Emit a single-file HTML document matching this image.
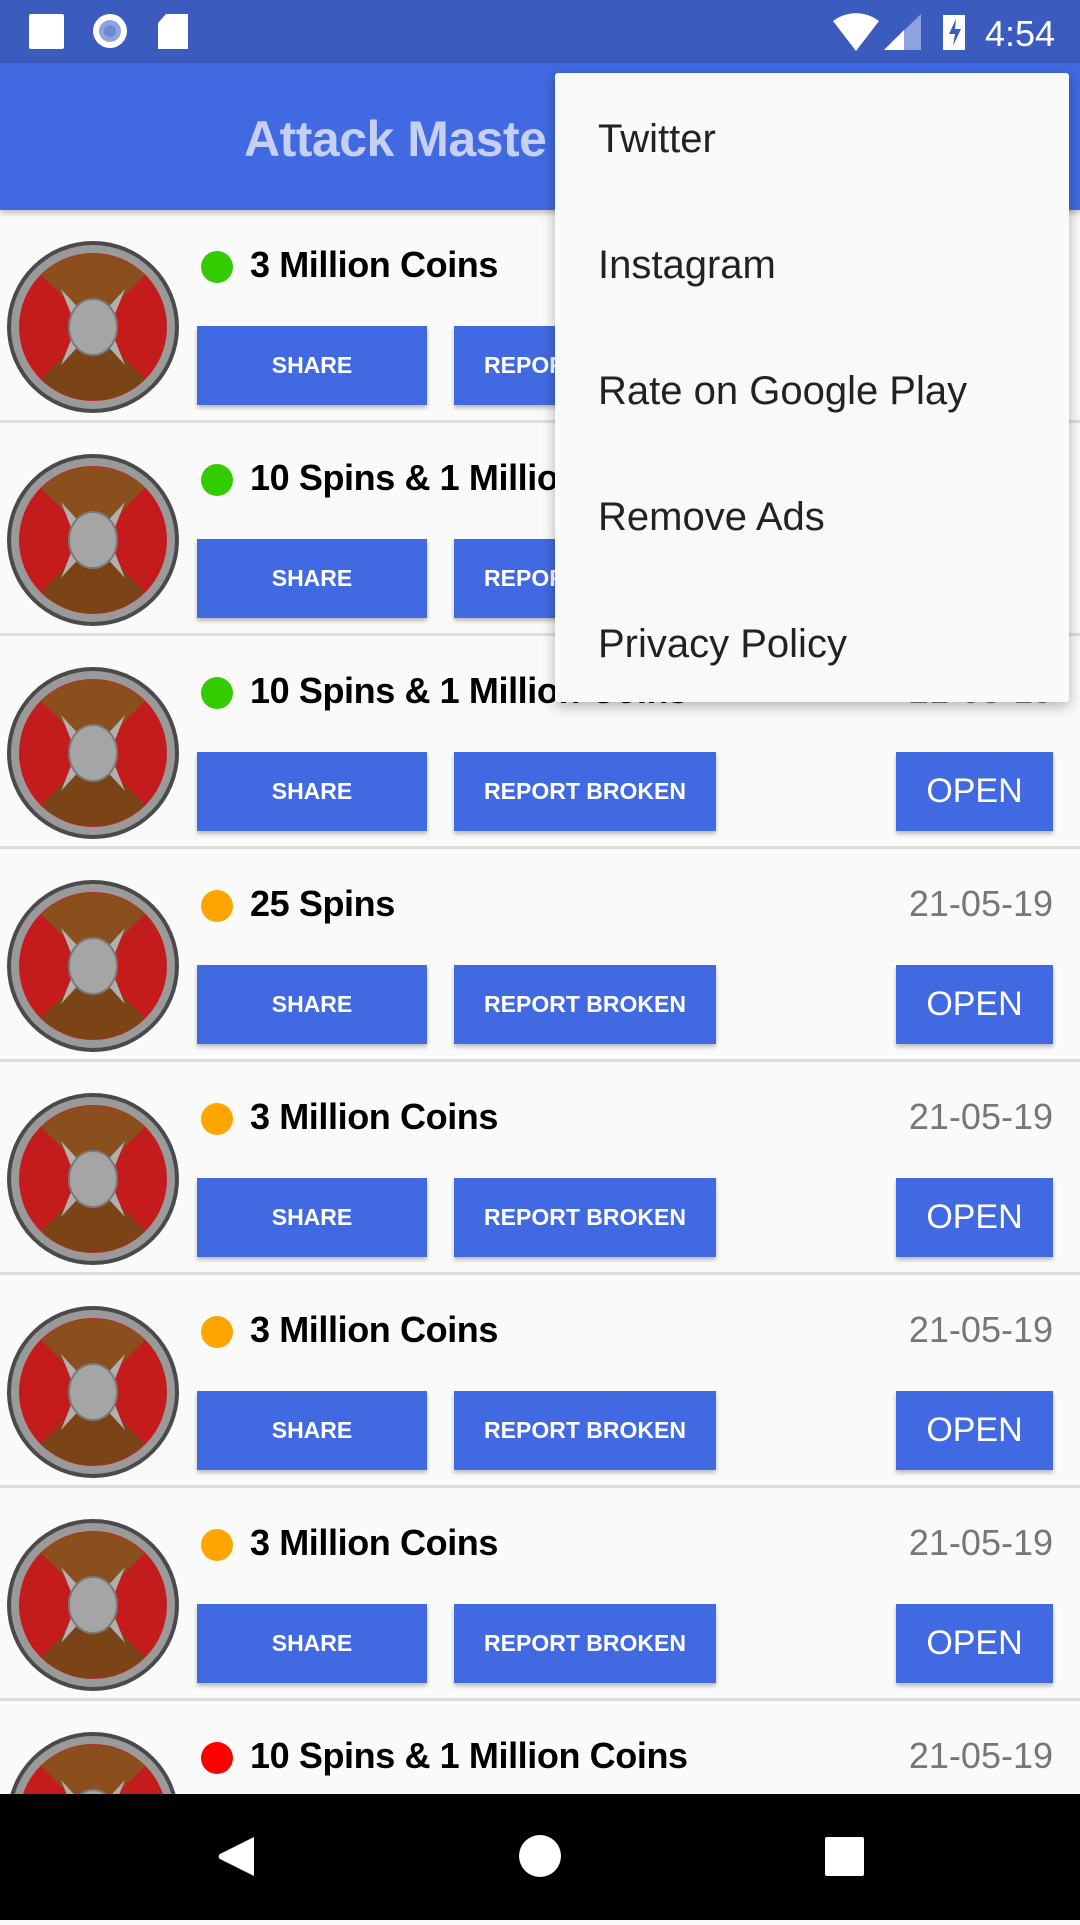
<!DOCTYPE html>
<html><head><meta charset="utf-8"><style>
*{margin:0;padding:0;box-sizing:border-box}
body{width:1080px;height:1920px;overflow:hidden;background:#fafafa;font-family:"Liberation Sans",sans-serif;position:relative}
.sb{position:absolute;left:0;top:0;width:1080px;height:63px;background:#3c5bbe}
.ab{position:absolute;left:0;top:63px;width:1080px;height:147px;background:#4169e1;box-shadow:0 3px 6px rgba(0,0,0,.25)}
.ab span{position:absolute;left:244px;top:47px;font-size:50px;font-weight:bold;color:#c6d0f6;letter-spacing:-0.5px}
.row{position:absolute;left:0;width:1080px;height:213px;border-bottom:3px solid #dcdcdc}
.ic{position:absolute;left:5px;top:29px}
.dot{position:absolute;left:201px;top:41px;width:32px;height:32px;border-radius:50%}
.t{position:absolute;left:250px;top:34px;font-size:36px;font-weight:bold;color:#000;letter-spacing:-0.4px}
.d{position:absolute;right:27px;top:34px;font-size:36px;color:#777}
.b{position:absolute;top:116px;height:79px;background:#4169e1;color:#fff;font-size:23px;font-weight:bold;display:flex;align-items:center;justify-content:center;box-shadow:0 3px 4px rgba(0,0,0,.25)}
.menu{position:absolute;left:555px;top:73px;width:514px;height:629px;background:#f9f9f9;box-shadow:0 4px 14px rgba(0,0,0,.3);border-radius:3px}
.menu div{position:absolute;left:43px;font-size:40px;color:#222}
.nav{position:absolute;left:0;top:1794px;width:1080px;height:126px;background:#000}
</style></head><body>
<div class="sb">
<svg width="1080" height="63">
<rect x="29" y="14" width="35" height="35" rx="2" fill="#fff"/>
<circle cx="110" cy="31" r="17" fill="#fff"/><circle cx="110" cy="31" r="11" fill="#8ea3e0"/><circle cx="110" cy="31" r="6" fill="#6f88d6"/>
<path d="M166 14h22v35h-30v-26z" fill="#fff"/>
<path d="M833 21a38 38 0 0 1 46 0l-23 30z" fill="#fff"/>
<path d="M884 50l37-36v36z" fill="#8fa2e0"/><path d="M884 50l20-20v20z" fill="#fff"/>
<rect x="943" y="15" width="22" height="35" fill="#fff"/><path d="M956 19l-7 15h6l-2 12 8-17h-6z" fill="#3c5bbe"/>
<text x="985" y="46" font-size="36" fill="#fff" font-family="Liberation Sans">4:54</text>
</svg></div>
<div class="ab"><span>Attack Maste</span></div>

<svg width="0" height="0" style="position:absolute"><defs>
<symbol id="sh" viewBox="0 0 176 176">
<circle cx="88" cy="88" r="86" fill="#4a4a4a"/><circle cx="88" cy="88" r="82" fill="#9a9a9a"/>
<circle cx="88" cy="88" r="74" fill="#c41c1c"/>
<path d="M88 88L36 36A74 74 0 0 1 140 36z" fill="#8a4f1c"/>
<path d="M88 88L36 140A74 74 0 0 0 140 140z" fill="#7a4416"/>
<path d="M56 50l22 24 10-4 10 4 22-24-12 30v16l12 30-22-24-10 4-10-4-22 24 12-30v-16z" fill="#b0b0b0"/>
<ellipse cx="88" cy="88" rx="24" ry="28" fill="#a5a5a5" stroke="#7a7a7a" stroke-width="2"/>
</symbol></defs></svg>

<div class="row" style="top:210px"><svg class="ic" width="176" height="176"><use href="#sh"/></svg><div class="dot" style="background:#33cc00"></div><div class="t">3 Million Coins</div><div class="d">21-05-19</div><div class="b" style="left:197px;width:230px">SHARE</div><div class="b" style="left:454px;width:262px">REPORT BROKEN</div><div class="b" style="left:896px;width:157px;font-size:34px;font-weight:normal">OPEN</div></div>
<div class="row" style="top:423px"><svg class="ic" width="176" height="176"><use href="#sh"/></svg><div class="dot" style="background:#33cc00"></div><div class="t">10 Spins &amp; 1 Million Coins</div><div class="d">21-05-19</div><div class="b" style="left:197px;width:230px">SHARE</div><div class="b" style="left:454px;width:262px">REPORT BROKEN</div><div class="b" style="left:896px;width:157px;font-size:34px;font-weight:normal">OPEN</div></div>
<div class="row" style="top:636px"><svg class="ic" width="176" height="176"><use href="#sh"/></svg><div class="dot" style="background:#33cc00"></div><div class="t">10 Spins &amp; 1 Million Coins</div><div class="d">21-05-19</div><div class="b" style="left:197px;width:230px">SHARE</div><div class="b" style="left:454px;width:262px">REPORT BROKEN</div><div class="b" style="left:896px;width:157px;font-size:34px;font-weight:normal">OPEN</div></div>
<div class="row" style="top:849px"><svg class="ic" width="176" height="176"><use href="#sh"/></svg><div class="dot" style="background:#ffa500"></div><div class="t">25 Spins</div><div class="d">21-05-19</div><div class="b" style="left:197px;width:230px">SHARE</div><div class="b" style="left:454px;width:262px">REPORT BROKEN</div><div class="b" style="left:896px;width:157px;font-size:34px;font-weight:normal">OPEN</div></div>
<div class="row" style="top:1062px"><svg class="ic" width="176" height="176"><use href="#sh"/></svg><div class="dot" style="background:#ffa500"></div><div class="t">3 Million Coins</div><div class="d">21-05-19</div><div class="b" style="left:197px;width:230px">SHARE</div><div class="b" style="left:454px;width:262px">REPORT BROKEN</div><div class="b" style="left:896px;width:157px;font-size:34px;font-weight:normal">OPEN</div></div>
<div class="row" style="top:1275px"><svg class="ic" width="176" height="176"><use href="#sh"/></svg><div class="dot" style="background:#ffa500"></div><div class="t">3 Million Coins</div><div class="d">21-05-19</div><div class="b" style="left:197px;width:230px">SHARE</div><div class="b" style="left:454px;width:262px">REPORT BROKEN</div><div class="b" style="left:896px;width:157px;font-size:34px;font-weight:normal">OPEN</div></div>
<div class="row" style="top:1488px"><svg class="ic" width="176" height="176"><use href="#sh"/></svg><div class="dot" style="background:#ffa500"></div><div class="t">3 Million Coins</div><div class="d">21-05-19</div><div class="b" style="left:197px;width:230px">SHARE</div><div class="b" style="left:454px;width:262px">REPORT BROKEN</div><div class="b" style="left:896px;width:157px;font-size:34px;font-weight:normal">OPEN</div></div>
<div class="row" style="top:1701px"><svg class="ic" width="176" height="176"><use href="#sh"/></svg><div class="dot" style="background:#ff0000"></div><div class="t">10 Spins &amp; 1 Million Coins</div><div class="d">21-05-19</div></div>

<div class="menu">
<div style="top:44px">Twitter</div>
<div style="top:170px">Instagram</div>
<div style="top:296px">Rate on Google Play</div>
<div style="top:422px">Remove Ads</div>
<div style="top:549px">Privacy Policy</div>
</div>

<div class="nav"><svg width="1080" height="126">
<path d="M254 43v39l-34-17a3 3 0 0 1 0-5z" fill="#fff"/>
<circle cx="540" cy="62" r="21" fill="#fff"/>
<rect x="825" y="43" width="39" height="39" rx="2" fill="#fff"/>
</svg></div>
</body></html>
